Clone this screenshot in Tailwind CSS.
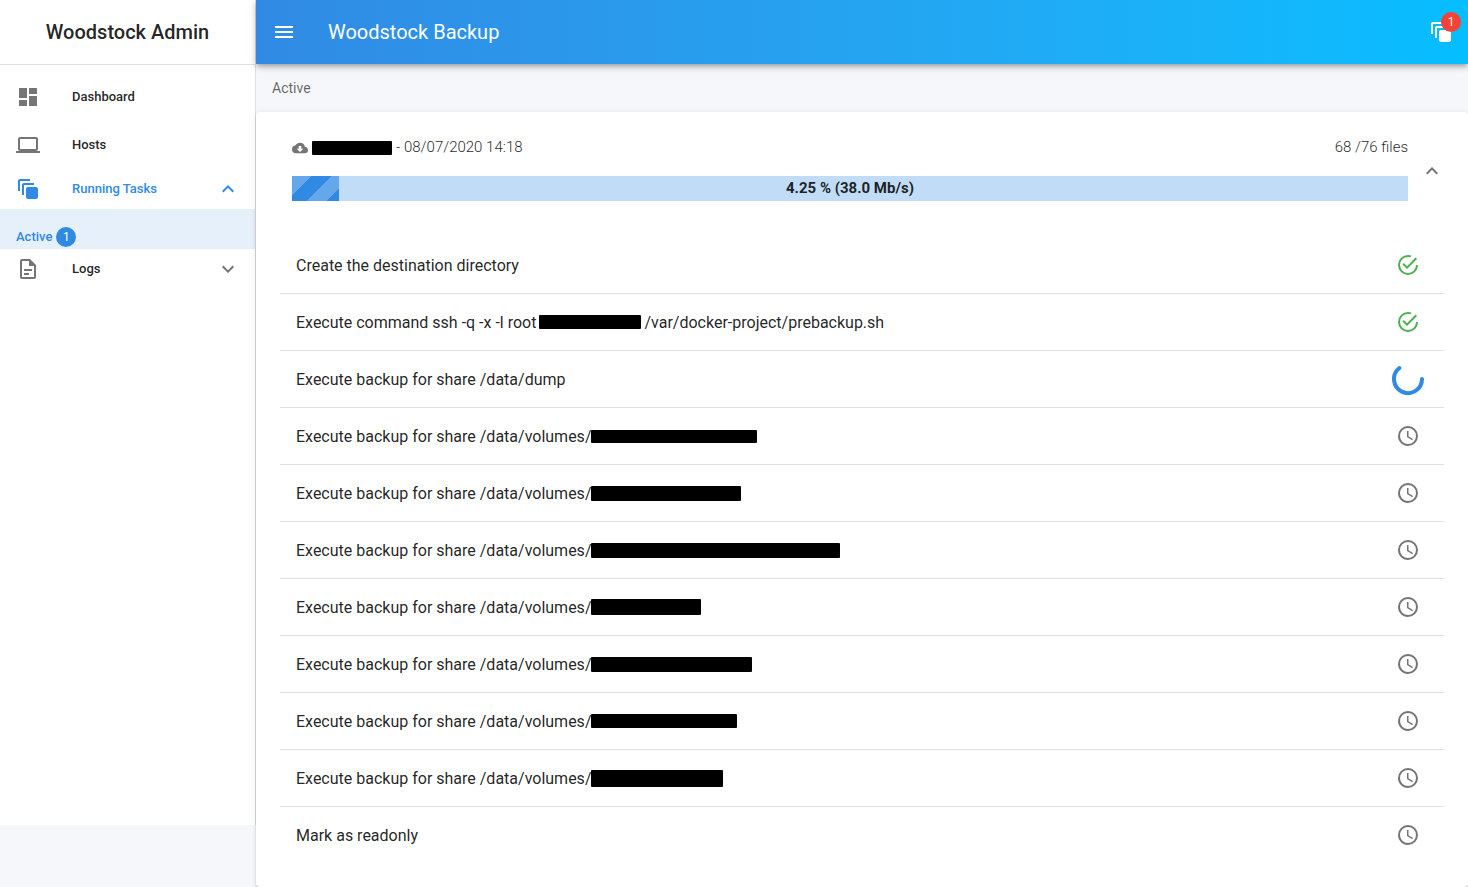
<!DOCTYPE html>
<html lang="en">
<head>
<meta charset="utf-8">
<meta name="viewport" content="width=device-width, initial-scale=1">
<title>Woodstock Backup</title>
<script src="https://cdn.jsdelivr.net/npm/@tailwindcss/browser@4"></script>
</head>
<body class="flex min-h-screen bg-[#f6f7fa] font-[Roboto,sans-serif] text-black/87">
<svg class="hidden" aria-hidden="true">
  <symbol id="i-tasks" viewBox="0 0 24 24"><path d="M4 2C2.89 2 2 2.89 2 4V14H4V4H14V2H4M8 6C6.89 6 6 6.89 6 8V18H8V8H18V6H8M12 10C10.89 10 10 10.89 10 12V20C10 21.1 10.9 22 12 22H20C21.1 22 22 21.1 22 20V12C22 10.89 21.1 10 20 10H12Z"/></symbol>
  <symbol id="i-up" viewBox="0 0 24 24"><path d="M7.41 15.41L12 10.83l4.59 4.58L18 14l-6-6-6 6z"/></symbol>
  <symbol id="i-down" viewBox="0 0 24 24"><path d="M7.41 8.59L12 13.17l4.59-4.58L18 10l-6 6-6-6z"/></symbol>
  <symbol id="i-done" viewBox="0 0 24 24"><path d="M20 12a8 8 0 0 1-8 8 8 8 0 0 1-8-8 8 8 0 0 1 8-8c.76 0 1.5.11 2.2.31l1.57-1.57A9.822 9.822 0 0 0 12 2 10 10 0 0 0 2 12a10 10 0 0 0 10 10 10 10 0 0 0 10-10M7.91 10.08L6.5 11.5 11 16 21 6l-1.41-1.42L11 13.17z"/></symbol>
  <symbol id="i-clock" viewBox="0 0 24 24"><path d="M12 20a8 8 0 0 0 8-8 8 8 0 0 0-8-8 8 8 0 0 0-8 8 8 8 0 0 0 8 8m0-18a10 10 0 0 1 10 10 10 10 0 0 1-10 10C6.47 22 2 17.5 2 12A10 10 0 0 1 12 2m.5 5v5.25l4.5 2.67-.75 1.23L11 13V7z"/></symbol>
</svg>

<aside class="flex w-64 shrink-0 flex-col pb-[62px]">
  <div class="flex flex-1 flex-col border-r border-black/12 bg-white">
    <h1 class="flex h-[65px] items-center justify-center border-b border-black/12 text-xl font-medium">Woodstock Admin</h1>
    <nav class="flex flex-col pt-2 text-[13px] font-medium">
      <a href="#" class="flex h-12 items-center gap-8 px-4">
        <svg class="size-6 fill-[#757575]" viewBox="0 0 24 24"><path d="M3 13h8V3H3v10zm0 8h8v-6H3v6zm10 0h8V11h-8v10zm0-18v6h8V3h-8z"/></svg>
        Dashboard</a>
      <a href="#" class="flex h-12 items-center gap-8 px-4">
        <svg class="size-6 fill-[#757575]" viewBox="0 0 24 24"><path d="M20 18c1.1 0 1.99-.9 1.99-2L22 6c0-1.1-.9-2-2-2H4c-1.1 0-2 .9-2 2v10c0 1.1.9 2 2 2H0v2h24v-2h-4zM4 6h16v10H4V6z"/></svg>
        Hosts</a>
      <button type="button" aria-expanded="true" class="flex h-10 items-center gap-8 pr-[15px] pl-4 text-left text-[#308ae3]">
        <svg class="size-6 fill-current"><use href="#i-tasks"/></svg>
        <span class="flex-1">Running Tasks</span>
        <svg class="size-6 fill-current"><use href="#i-up"/></svg>
      </button>
      <a href="#" class="flex h-10 items-end gap-1 bg-[#e6f0fb] px-4 pb-[2px] leading-5 text-[#308ae3]">Active
        <span class="flex size-5 items-center justify-center rounded-full bg-[#308ae3] text-xs font-normal text-white">1</span></a>
      <button type="button" aria-expanded="false" class="flex h-10 items-center gap-8 pr-[15px] pl-4 text-left">
        <svg class="size-6 fill-[#757575]" viewBox="0 0 24 24"><path d="M6 2a2 2 0 0 0-2 2v16a2 2 0 0 0 2 2h12a2 2 0 0 0 2-2V8l-6-6H6m0 2h7v5h5v11H6V4m2 8v2h8v-2H8m0 4v2h5v-2H8z"/></svg>
        <span class="flex-1">Logs</span>
        <svg class="size-6 fill-[#757575]"><use href="#i-down"/></svg>
      </button>
    </nav>
  </div>
</aside>

<div class="flex min-w-0 flex-1 flex-col">
  <header class="z-10 flex h-16 items-center bg-linear-to-r from-[#308ae3] to-[#04beff] pr-[15px] pl-4 text-white shadow-[0_2px_4px_-1px_rgba(0,0,0,0.2),0_4px_5px_0_rgba(0,0,0,0.14),0_1px_10px_0_rgba(0,0,0,0.12)]">
    <button type="button" aria-label="Menu" class="mr-8"><svg class="size-6 fill-current" viewBox="0 0 24 24"><path d="M3 18h18v-2H3v2zm0-5h18v-2H3v2zm0-7v2h18V6H3z"/></svg></button>
    <span class="flex-1 text-xl">Woodstock Backup</span>
    <button type="button" aria-label="Running tasks" class="relative">
      <svg class="size-6 fill-current"><use href="#i-tasks"/></svg>
      <span class="absolute -top-2 -right-2 flex size-5 items-center justify-center rounded-full bg-[#f44336] text-xs">1</span>
    </button>
  </header>
  <div class="flex h-12 items-center px-4 text-sm text-black/60">Active</div>

  <main class="flex-1 rounded bg-white px-6 pb-6 shadow-[0_3px_1px_-2px_rgba(0,0,0,0.2),0_2px_2px_0_rgba(0,0,0,0.14),0_1px_5px_0_rgba(0,0,0,0.12)]">
    <div class="flex h-[125px] gap-3 pt-6 pl-3">
      <div class="flex-1">
        <div class="flex h-10 items-start justify-between text-[15px] leading-[23px] font-light">
          <div class="flex items-center gap-1">
            <svg class="size-4 fill-[#757575]" viewBox="0 0 24 24"><path d="M17 13l-5 5-5-5h3V9h4v4m5.35-2.97A7.49 7.49 0 0 0 12 4C9.11 4 6.6 5.64 5.35 8.03A6.004 6.004 0 0 0 0 14a6 6 0 0 0 6 6h13a5 5 0 0 0 5-5c0-2.64-2.05-4.78-4.65-4.97z"/></svg>
            <span class="h-[14px] w-20 rounded-[1px] bg-black"></span>
            <span>- 08/07/2020 14:18</span>
          </div>
          <span>68 /76 files</span>
        </div>
        <div role="progressbar" aria-label="Backup progress" aria-valuenow="4.25" aria-valuemin="0" aria-valuemax="100" class="grid h-[25px] items-center bg-[#c1dcf7]">
          <div class="col-start-1 row-start-1 h-full bg-[#308ae3] bg-[linear-gradient(135deg,rgba(255,255,255,0.25)_25%,transparent_25%,transparent_50%,rgba(255,255,255,0.25)_50%,rgba(255,255,255,0.25)_75%,transparent_75%)] bg-size-[40px_40px]" style="width:4.25%"></div>
          <strong class="col-start-1 row-start-1 text-center text-[15px] font-bold">4.25 % (38.0 Mb/s)</strong>
        </div>
      </div>
      <button type="button" aria-label="Collapse" class="mt-[23px] h-6"><svg class="size-6 fill-[#757575]"><use href="#i-up"/></svg></button>
    </div>

    <ul class="divide-y divide-black/12 leading-[25px]">
      <li class="flex h-[57px] items-center justify-between pr-6 pl-4">
        <span>Create the destination directory</span>
        <svg class="size-6 fill-[#4caf50]"><use href="#i-done"/></svg>
      </li>
      <li class="flex h-[57px] items-center justify-between pr-6 pl-4">
        <span class="flex items-center gap-[3px]">Execute command ssh -q -x -l root <span class="h-[14px] w-[102px] rounded-[1px] bg-black"></span> /var/docker-project/prebackup.sh</span>
        <svg class="size-6 fill-[#4caf50]"><use href="#i-done"/></svg>
      </li>
      <li class="flex h-[57px] items-center justify-between pr-5 pl-4">
        <span>Execute backup for share /data/dump</span>
        <svg class="size-8" viewBox="0 0 32 32" fill="none" stroke="#308ae3" stroke-width="4" stroke-linecap="round" role="img" aria-label="Running"><path d="M30 16A14 14 0 1 1 7.4 5"/></svg>
      </li>
      <li class="flex h-[57px] items-center justify-between pr-6 pl-4">
        <span class="flex items-center">Execute backup for share /data/volumes/<span class="h-[13px] w-[166px] rounded-[1px] bg-black"></span></span>
        <svg class="size-6 fill-[#757575]"><use href="#i-clock"/></svg>
      </li>
      <li class="flex h-[57px] items-center justify-between pr-6 pl-4">
        <span class="flex items-center">Execute backup for share /data/volumes/<span class="h-[15px] w-[150px] rounded-[1px] bg-black"></span></span>
        <svg class="size-6 fill-[#757575]"><use href="#i-clock"/></svg>
      </li>
      <li class="flex h-[57px] items-center justify-between pr-6 pl-4">
        <span class="flex items-center">Execute backup for share /data/volumes/<span class="h-[15px] w-[249px] rounded-[1px] bg-black"></span></span>
        <svg class="size-6 fill-[#757575]"><use href="#i-clock"/></svg>
      </li>
      <li class="flex h-[57px] items-center justify-between pr-6 pl-4">
        <span class="flex items-center">Execute backup for share /data/volumes/<span class="h-4 w-[110px] rounded-[1px] bg-black"></span></span>
        <svg class="size-6 fill-[#757575]"><use href="#i-clock"/></svg>
      </li>
      <li class="flex h-[57px] items-center justify-between pr-6 pl-4">
        <span class="flex items-center">Execute backup for share /data/volumes/<span class="h-[15px] w-[161px] rounded-[1px] bg-black"></span></span>
        <svg class="size-6 fill-[#757575]"><use href="#i-clock"/></svg>
      </li>
      <li class="flex h-[57px] items-center justify-between pr-6 pl-4">
        <span class="flex items-center">Execute backup for share /data/volumes/<span class="h-[14px] w-[146px] rounded-[1px] bg-black"></span></span>
        <svg class="size-6 fill-[#757575]"><use href="#i-clock"/></svg>
      </li>
      <li class="flex h-[57px] items-center justify-between pr-6 pl-4">
        <span class="flex items-center">Execute backup for share /data/volumes/<span class="h-[17px] w-[132px] rounded-[1px] bg-black"></span></span>
        <svg class="size-6 fill-[#757575]"><use href="#i-clock"/></svg>
      </li>
      <li class="flex h-14 items-center justify-between pr-6 pl-4">
        <span>Mark as readonly</span>
        <svg class="size-6 fill-[#757575]"><use href="#i-clock"/></svg>
      </li>
    </ul>
  </main>
</div>
</body>
</html>
